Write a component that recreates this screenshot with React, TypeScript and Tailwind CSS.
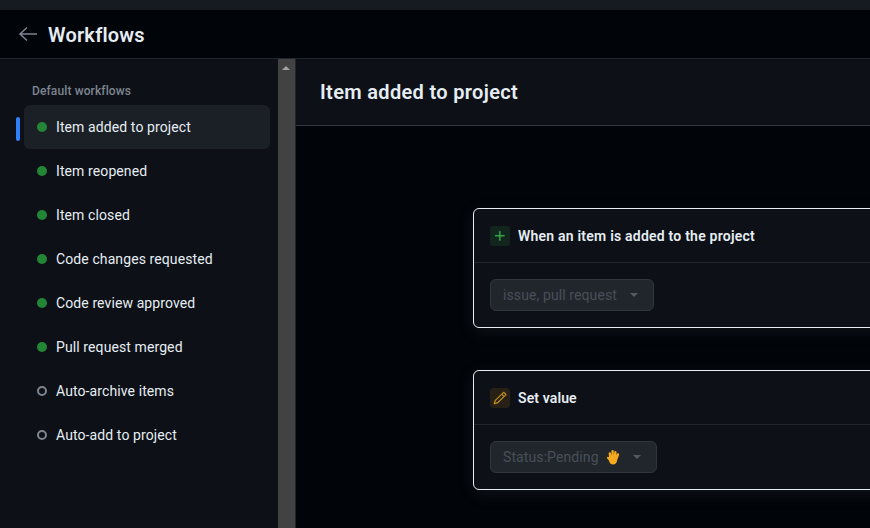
import { GoPencil, GoPlus } from 'react-icons/go';

const workflows = [
  { name: 'Item added to project', on: true, active: true },
  { name: 'Item reopened', on: true },
  { name: 'Item closed', on: true },
  { name: 'Code changes requested', on: true },
  { name: 'Code review approved', on: true },
  { name: 'Pull request merged', on: true },
  { name: 'Auto-archive items', on: false },
  { name: 'Auto-add to project', on: false },
];

function Caret() {
  return <span className="w-0 h-0 border-x-[4px] border-x-transparent border-t-[4px] border-t-[#545a62]" />;
}

function Hand() {
  return (
    <svg width="16" height="16" viewBox="0 0 16 16" fill="none" stroke="#f4a91f" strokeLinecap="round" className="shrink-0">
      <path strokeWidth="2.4" d="M5.300 8 4.800 4.400M7.600 7.500V2.300M9.900 7.500l.5-4.300M11.900 8.500l1-3" />
      <path strokeWidth="2.200" d="M3 8.800l2.200 2.400" />
      <path fill="#f4a91f" stroke="none" d="M4 6.500h9l-.9 5.200C11.600 14 10.200 15.400 8 15.400c-2 0-3.100-1-3.800-2.600z" />
    </svg>
  );
}

export default function App() {
  return (
    <div className="w-[870px] h-[528px] flex flex-col overflow-hidden bg-[#010409] text-[#e6edf3] font-['Roboto','Noto_Sans',sans-serif]">
      <div className="h-[10px] shrink-0 bg-[#161b22]" />

      <div className="h-[49px] shrink-0 flex items-center pl-[18px] bg-[#010409] border-b border-[#21262d]">
        <svg width="20" height="16" viewBox="0 0 20 16" fill="none" stroke="#7d8590" strokeWidth="1.5" className="mr-[10px]">
          <path d="M19 8H2M9 1.500 2 8l7 6.500" />
        </svg>
        <h1 className="text-[20px] font-semibold leading-none pt-[2px] tracking-[0.2px]">Workflows</h1>
      </div>

      <div className="flex-1 flex min-h-0">
        <aside className="w-[278px] shrink-0 bg-[#0d1117] pt-[24px] pl-[16px] pr-[8px]">
          <div className="pl-[16px] text-[12px] font-medium leading-[16px] tracking-[0.12px] text-[#7d8590] mb-[6px]">Default workflows</div>
          <ul className="flex flex-col">
            {workflows.map(w => (
              <li key={w.name} className="relative pl-[8px]">
                {w.active && <span className="absolute left-0 top-[12px] w-[4px] h-[24px] rounded-[2px] bg-[#2f81f7]" />}
                <div className={`h-[44px] flex items-center pl-[13px] rounded-[6px] ${w.active ? 'bg-[#1b2026]' : ''}`}>
                  {w.on
                    ? <span className="w-[10px] h-[10px] rounded-full bg-[#238636] mr-[9px]" />
                    : <span className="w-[10px] h-[10px] rounded-full border-2 border-[#7d8590] mr-[9px]" />}
                  <span className="text-[14px] leading-[20px] tracking-[0.1px]">{w.name}</span>
                </div>
              </li>
            ))}
          </ul>
        </aside>

        <div className="w-[17px] shrink-0 bg-[#424242] flex justify-center pt-[7px] pr-[1px]">
          <span className="w-0 h-0 border-x-[4px] border-x-transparent border-b-[4px] border-b-[#a3a3a3]" />
        </div>

        <main className="flex-1 min-w-0 flex flex-col border-l border-[#21262d]">
          <div className="h-[67px] shrink-0 flex items-center pl-[24px] bg-[#0d1117] border-b border-[#30363d]">
            <h2 className="text-[20px] font-semibold leading-none tracking-[0.33px]">Item added to project</h2>
          </div>

          <div className="flex-1 pl-[177px] pt-[82px] flex flex-col gap-[42px] overflow-hidden">
            <section className="w-[600px] h-[120px] shrink-0 rounded-[6px] border border-[#e6edf3] bg-[#0d1117] shadow-[0_4px_16px_rgba(110,118,129,0.15)]">
              <div className="h-[54px] flex items-center pl-[16px] gap-[8px] border-b border-[#21262d]">
                <span className="w-[20px] h-[20px] rounded-[4px] bg-[#12261e] text-[#3fb950] flex items-center justify-center">
                  <GoPlus size={16} className="stroke-[#3fb950] stroke-[0.4px]" />
                </span>
                <span className="text-[14px] font-semibold pt-[1px] tracking-[0.22px]">When an item is added to the project</span>
              </div>
              <div className="pt-[16px] pl-[16px]">
                <div className="inline-flex items-center h-[32px] pl-[12px] pr-[15px] gap-[13px] rounded-[6px] border border-[#30363d] bg-[#21262d] text-[14px] tracking-[0.1px] text-[#484f58]">
                  issue, pull request
                  <Caret />
                </div>
              </div>
            </section>

            <section className="w-[600px] h-[120px] shrink-0 rounded-[6px] border border-[#e6edf3] bg-[#0d1117] shadow-[0_4px_16px_rgba(110,118,129,0.15)]">
              <div className="h-[54px] flex items-center pl-[16px] gap-[8px] border-b border-[#21262d]">
                <span className="w-[20px] h-[20px] rounded-[4px] bg-[#272115] text-[#d29922] flex items-center justify-center">
                  <GoPencil size={14} className="stroke-[#d29922] stroke-[0.5px]" />
                </span>
                <span className="text-[14px] font-semibold pt-[1px] tracking-[0.12px]">Set value</span>
              </div>
              <div className="pt-[16px] pl-[16px]">
                <div className="inline-flex items-center h-[32px] pl-[12px] pr-[15px] rounded-[6px] border border-[#30363d] bg-[#21262d] text-[14px] tracking-[0.1px] text-[#484f58]">
                  Status:Pending
                  <span className="ml-[6px] mr-[12px]"><Hand /></span>
                  <Caret />
                </div>
              </div>
            </section>
          </div>
        </main>
      </div>
    </div>
  );
}
